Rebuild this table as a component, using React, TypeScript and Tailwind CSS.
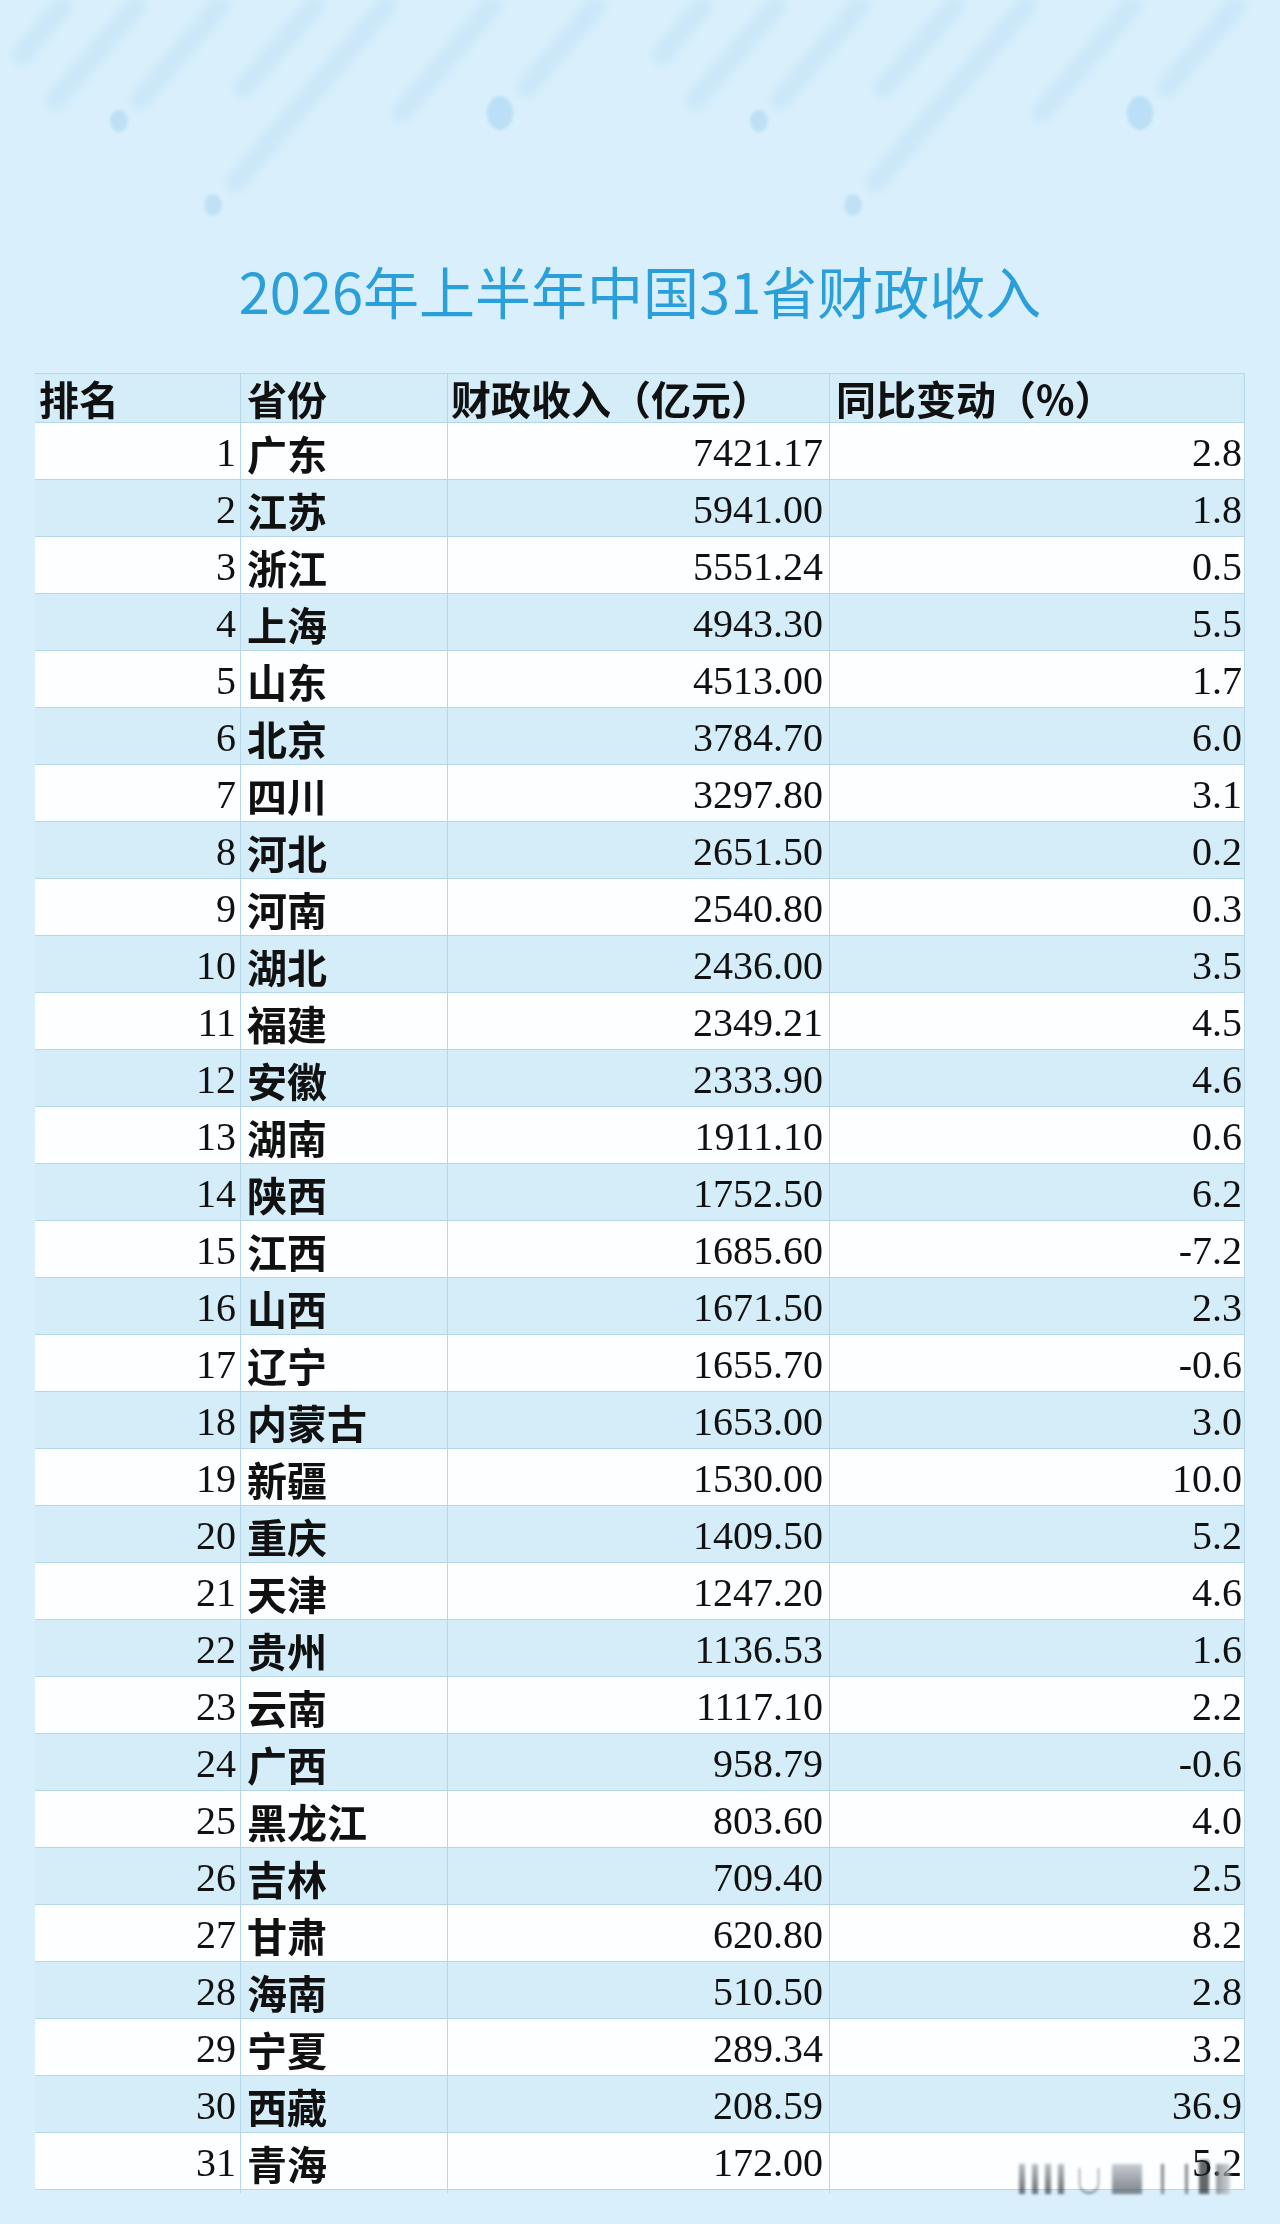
const rows: [number, string, string, string][] = [
  [1, '广东', '7421.17', '2.8'],
  [2, '江苏', '5941.00', '1.8'],
  [3, '浙江', '5551.24', '0.5'],
  [4, '上海', '4943.30', '5.5'],
  [5, '山东', '4513.00', '1.7'],
  [6, '北京', '3784.70', '6.0'],
  [7, '四川', '3297.80', '3.1'],
  [8, '河北', '2651.50', '0.2'],
  [9, '河南', '2540.80', '0.3'],
  [10, '湖北', '2436.00', '3.5'],
  [11, '福建', '2349.21', '4.5'],
  [12, '安徽', '2333.90', '4.6'],
  [13, '湖南', '1911.10', '0.6'],
  [14, '陕西', '1752.50', '6.2'],
  [15, '江西', '1685.60', '-7.2'],
  [16, '山西', '1671.50', '2.3'],
  [17, '辽宁', '1655.70', '-0.6'],
  [18, '内蒙古', '1653.00', '3.0'],
  [19, '新疆', '1530.00', '10.0'],
  [20, '重庆', '1409.50', '5.2'],
  [21, '天津', '1247.20', '4.6'],
  [22, '贵州', '1136.53', '1.6'],
  [23, '云南', '1117.10', '2.2'],
  [24, '广西', '958.79', '-0.6'],
  [25, '黑龙江', '803.60', '4.0'],
  [26, '吉林', '709.40', '2.5'],
  [27, '甘肃', '620.80', '8.2'],
  [28, '海南', '510.50', '2.8'],
  [29, '宁夏', '289.34', '3.2'],
  [30, '西藏', '208.59', '36.9'],
  [31, '青海', '172.00', '5.2'],
];

// streaks repeat every 640px across the top
const streaks: [number, number, number, number][] = [
  [22, 55, 62, 6],
  [56, 100, 136, 6],
  [140, 100, 220, 6],
  [244, 88, 314, 6],
  [236, 182, 386, 6],
  [402, 112, 492, 6],
  [526, 88, 596, 6],
];

function Rain() {
  return (
    <svg className="absolute left-0 top-0" width="1280" height="240" viewBox="0 0 1280 240">
      <defs>
        <filter id="soft" x="-20%" y="-20%" width="140%" height="140%">
          <feGaussianBlur stdDeviation="4" />
        </filter>
        <filter id="dot" x="-50%" y="-50%" width="200%" height="200%">
          <feGaussianBlur stdDeviation="1.5" />
        </filter>
      </defs>
      {[0, 640].map((off) => (
        <g key={off} transform={`translate(${off} 0)`}>
          <g filter="url(#soft)">
            {streaks.map(([x1, y1, x2, y2], i) => (
              <line
                key={i}
                x1={x1}
                y1={y1}
                x2={x2}
                y2={y2}
                stroke="#c2e1f5"
                strokeWidth="20"
                strokeLinecap="round"
                opacity="0.6"
              />
            ))}
          </g>
          <g filter="url(#dot)">
            <ellipse cx="119" cy="121" rx="9" ry="11" fill="#bde0f5" />
            <ellipse cx="213" cy="205" rx="9" ry="11" fill="#c0e1f5" />
            <ellipse cx="500" cy="113" rx="13" ry="17" fill="#bbdff6" />
          </g>
        </g>
      ))}
    </svg>
  );
}

const cjk = "font-['Noto_Sans_CJK_SC',sans-serif]";
const num = "font-['Liberation_Serif','Times_New_Roman',serif]";

export default function App() {
  return (
    <div className="relative w-[1280px] h-[2224px] overflow-hidden bg-[#d9f0fc]">
      <Rain />

      <div className="relative pt-[258px]">
        <h1
          className={`text-center text-[56px] leading-[64px] font-normal text-[#2a9fd9] ${cjk}`}
        >
          2026年上半年中国31省财政收入
        </h1>

        <div className="mt-[51px] ml-[35px] w-[1210px] border-r border-[#b6d7e9]">
          {/* header */}
          <div
            className={`grid grid-cols-[206px_207px_382px_415px] h-[50px] bg-[#d5edf9] border-t border-b border-[#b6d7e9] text-[40px] leading-[48px] font-bold text-[#111] ${cjk}`}
          >
            <div className="pl-[4px] border-r border-[#b6d7e9] flex items-center">排名</div>
            <div className="pl-[6px] border-r border-[#b6d7e9] flex items-center">省份</div>
            <div className="pl-[3px] border-r border-[#b6d7e9] flex items-center whitespace-nowrap">
              财政收入（亿元）
            </div>
            <div className="pl-[6px] flex items-center whitespace-nowrap">同比变动（%）</div>
          </div>

          {rows.map(([rank, name, income, change], i) => (
            <div
              key={rank}
              className={`grid grid-cols-[206px_207px_382px_415px] h-[57px] border-b border-[#b6d7e9] text-[#111] ${
                i % 2 === 0 ? 'bg-[#fcfeff]' : 'bg-[#d5edf9]'
              }`}
            >
              <div
                className={`pr-[4px] border-r border-[#b6d7e9] flex items-center justify-end text-[40px] ${num}`}
              >
                {rank}
              </div>
              <div
                className={`pl-[6px] border-r border-[#b6d7e9] flex items-center text-[40px] font-bold ${cjk}`}
              >
                {name}
              </div>
              <div
                className={`pr-[6px] border-r border-[#b6d7e9] flex items-center justify-end text-[40px] ${num}`}
              >
                {income}
              </div>
              <div className={`pr-[3px] flex items-center justify-end text-[40px] ${num}`}>
                {change}
              </div>
            </div>
          ))}
        </div>
      </div>

      {/* blurred watermark over the last row */}
      <div className="absolute left-[1019px] top-[2160px] flex items-end gap-[7px] opacity-70 blur-[1.5px]">
        <div className="w-[6px] h-[30px] bg-gradient-to-b from-[#9aa3aa] to-[#30373d]" />
        <div className="w-[6px] h-[30px] bg-gradient-to-b from-[#9aa3aa] to-[#30373d]" />
        <div className="w-[6px] h-[30px] bg-gradient-to-b from-[#9aa3aa] to-[#30373d]" />
        <div className="w-[6px] h-[30px] bg-gradient-to-b from-[#9aa3aa] to-[#30373d]" />
        <div className="w-[20px] h-[26px] ml-[8px] border-b-2 border-l border-r border-[#30373d] rounded-b-[10px]" />
        <div className="w-[30px] h-[30px] ml-[6px] bg-gradient-to-b from-[#b0b8be] to-[#4a5258]" />
        <div className="w-[3px] h-[30px] ml-[12px] bg-[#50585e]" />
        <div className="w-[3px] h-[30px] ml-[14px] bg-[#50585e]" />
        <div className="w-[10px] h-[34px] ml-[4px] bg-[#22282c]" />
        <div className="w-[14px] h-[30px] bg-gradient-to-r from-[#6a7278] to-[#c0c6ca]" />
      </div>
    </div>
  );
}
